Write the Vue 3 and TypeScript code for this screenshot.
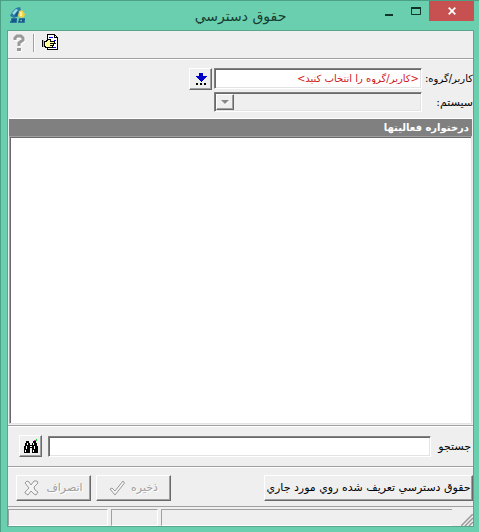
<script setup lang="ts">
import { ref } from 'vue'

const search = ref('')
const userGroup = ref('<كاربر/گروه را انتخاب كنيد>')
</script>

<template>
  <main class="window">
    <header class="titlebar">
      <svg class="logo" viewBox="0 0 16 16" aria-hidden="true">
        <path d="M0 9 2 5 6 1 10 0 11 3 9 9 4 11Z" fill="#2c7ba5" />
        <path d="M2 6 6 2 8 3 4 8Z" fill="#9bdce8" />
        <path d="M5 8 8 4 9 5 6 10Z" fill="#14598a" />
        <path d="M9 4 12 3 15 7 14 10 11 11 8 9Z" fill="#f5cf45" />
        <path d="M10 5 12 5 12 9 10 9Z" fill="#fff3a0" />
        <path d="M7 12H2V13.500H6V15H0M15 12H10L9 15H14V13.500H12" fill="none" stroke="#17598f" stroke-width="1.500" />
      </svg>
      <h1>حقوق دسترسي</h1>
      <div class="controls">
        <button class="ctl" aria-label="Minimize"><svg width="8" height="10"><path d="M0 8H8V10H0Z" fill="#12352a" /></svg></button>
        <button class="ctl" aria-label="Maximize"><svg width="10" height="10"><path d="M.5 2V8.500H9.500V2Z" fill="none" stroke="#12352a" /><path d="M0 1H10V3H0Z" fill="#12352a" /></svg></button>
        <button class="ctl close" aria-label="Close"><svg width="8" height="8"><path d="M.7.7 7.300 7.300M7.300.7.7 7.300" stroke="#fff" stroke-width="1.800" /></svg></button>
      </div>
    </header>

    <div class="client">
      <nav class="toolbar">
        <button class="tool help" aria-label="Help" disabled>
          <svg width="14" height="18" viewBox="0 0 14 18">
            <path d="M3 6V4L5 2H9L11 4V6L7 9V12" fill="none" stroke="#fff" stroke-width="3" transform="translate(1 1)" />
            <path d="M3 6V4L5 2H9L11 4V6L7 9V12" fill="none" stroke="#999" stroke-width="3" />
            <path d="M6 15H10V18H6Z" fill="#fff" /><path d="M5 14H9V17H5Z" fill="#999" />
          </svg>
        </button>
        <span class="sep"></span>
        <button class="tool" aria-label="Properties">
          <svg width="16" height="16" viewBox="0 0 16 16" shape-rendering="crispEdges">
            <path d="M5.500.5H12.500L15.500 3.500V15.500H5.500Z" fill="#fff" stroke="#000" />
            <path d="M12.500.5V3.500H15.500" fill="none" stroke="#000" />
            <path d="M7 3.500H11M12 6.500H14M12 9.500H14M8 13.500H14" stroke="#00f" />
            <path d="M2.500 7.500H4L6.500 5.500H8.500V7.500H12.500V9.500H11.500V11.500H10.500V13.500H4.500L2.500 12.500Z" fill="#ffff9c" stroke="#000" />
            <path d="M8 9.500H12M8 11.500H11" stroke="#000" />
            <path d="M0 6H2V13H0Z" fill="#0ff" /><path d="M0 6H1V13H0Z" fill="#000" />
          </svg>
        </button>
      </nav>

      <form class="fields" @submit.prevent>
        <div class="field">
          <button type="button" class="raised pick" aria-label="انتخاب">
            <svg width="12" height="14" viewBox="0 0 12 14" shape-rendering="crispEdges">
              <path d="M4 1H8V4H12L6 10L0 4H4Z" fill="#0000c8" />
              <path d="M1 11H3V13H1ZM5 11H7V13H5ZM9 11H11V13H9Z" />
            </svg>
          </button>
          <input id="user" v-model="userGroup" class="sunken user" readonly />
          <label for="user" class="small">كاربر/گروه:</label>
        </div>
        <div class="field">
          <div class="combo">
            <select id="system" class="sunken" disabled><option></option></select>
            <span class="raised arrow"><svg width="8" height="5"><path d="M1 1H8L4.500 5Z" fill="#fff" /><path d="M0 0H8L4 4Z" fill="#888" /></svg></span>
          </div>
          <label for="system">سيستم:</label>
        </div>
      </form>

      <section class="tree-panel">
        <h2>درختواره فعاليتها</h2>
        <div class="tree" role="tree" aria-label="درختواره فعاليتها"></div>
      </section>

      <form class="search" @submit.prevent>
        <button class="raised find" aria-label="جستجو">
          <svg width="16" height="16" viewBox="0 0 16 16" shape-rendering="crispEdges">
            <path d="M3 3H6V5H7V7H9V5H10V3H13V5H14V8H15V15H9V10H7V15H1V8H2V5H3Z" />
            <path d="M4 5H5V7H4ZM3 8H4V11H3ZM2 12H3V14H2ZM7 8H9V9H7ZM10 5H11V7H10ZM11 8H12V11H11ZM10 12H11V14H10Z" fill="#fff" />
            <path d="M11 2H13V3H11Z" fill="#b030b0" /><path d="M13 1H14V3H13Z" fill="#2c3" />
          </svg>
        </button>
        <input id="search" v-model="search" class="sunken" />
        <label for="search">جستجو</label>
      </form>

      <div class="actions">
        <button class="raised action" disabled>
          <svg width="16" height="16" viewBox="0 0 16 16"><path d="M1 3 3 1 5 2 7 5 10 1 13 1 14 3 10 7 11 10 14 12 12 15 10 14 7 11 4 15 1 13 1 12 5 8Z" fill="#f4f4f4" stroke="#999" /></svg>
          <span>انصراف</span>
        </button>
        <button class="raised action" disabled>
          <svg width="16" height="16" viewBox="0 0 16 16"><path d="M1 9 3 8 6 11 14 1 15.500 3 6 15Z" fill="#f4f4f4" stroke="#999" /></svg>
          <span>ذخيره</span>
        </button>
        <button class="raised rights"><span>حقوق دسترسي تعريف شده روي مورد جاري</span></button>
      </div>

      <footer class="status">
        <span class="pane first"></span>
        <span class="pane second"></span>
        <span class="pane rest"></span>
        <svg class="grip" width="12" height="12"><path d="M0 12 12 0M4 12 12 4M8 12 12 8" stroke="#999" stroke-width="1.500" /></svg>
      </footer>
    </div>
  </main>
</template>

<style>
body { margin: 0; }
</style>

<style scoped>
* { box-sizing: border-box; }
.window {
  display: flex;
  flex-direction: column;
  min-height: 100vh;
  padding: 0 5px 5px 6px;
  background: #69cfae;
  border-top: 1px solid #4ca184;
  border-left: 1px solid #4ca184;
  font: 11px/14px "DejaVu Sans", Tahoma, sans-serif;
  color: #000;
}
button, input, select { font: inherit; color: inherit; margin: 0; padding: 0; border-radius: 0; }
button { display: flex; align-items: center; justify-content: center; border: 0; background: none; }
h1, h2 { margin: 0; }
.titlebar { display: flex; height: 29px; }
.logo { width: 16px; height: 16px; margin: 6px 0 0 3px; }
h1 {
  flex: 1;
  margin-left: 80px;
  text-align: center;
  direction: rtl;
  font-size: 14px;
  line-height: 30px;
  font-weight: 400;
  color: #173c30;
}
.controls { display: flex; }
.ctl { width: 27px; height: 20px; }
.close { width: 45px; background: #c75050; }
.client {
  flex: 1;
  display: flex;
  flex-direction: column;
  overflow: hidden;
  background: #efefef;
  border: 1px solid #5ba58b;
}
.toolbar { display: flex; align-items: flex-start; gap: 6px; height: 29px; padding: 3px 4px; border-bottom: 1px solid #fff; box-shadow: inset 0 -1px #a0a0a0; }
.help { width: 14px; }
.sep { width: 2px; height: 18px; margin: 0 1px; background: #a0a0a0; border-right: 1px solid #fff; }
.raised { background: #efefef; border: 1px solid; border-color: #fff #696969 #696969 #fff; box-shadow: inset -1px -1px #a0a0a0; }
.sunken { border: 1px solid; border-color: #808080 #fff #fff #808080; box-shadow: inset 1px 1px #696969, inset -1px -1px #e3e3e3; background: #fff; outline: 0; }
.fields { display: flex; flex-direction: column; gap: 2px; height: 58px; padding: 8px 0 0; }
.field { display: flex; justify-content: flex-end; gap: 2px; }
.field label { width: 49px; direction: rtl; white-space: nowrap; line-height: 22px; }
.pick { width: 23px; height: 22px; }
.user { width: 208px; height: 21px; padding: 0 2px; direction: rtl; font-size: 10px; color: #d01820; }
.small { font-size: 10px; }
.combo { display: grid; width: 208px; height: 20px; }
.combo > * { grid-area: 1 / 1; }
select { appearance: none; opacity: 1; width: 100%; }
select.sunken { background: #efefef; }
.arrow { display: flex; align-items: center; justify-content: center; width: 18px; height: 16px; margin: 2px; }
.tree-panel { flex: 1; display: flex; flex-direction: column; border-top: 1px solid #fff; padding: 0 1px; }
h2 { height: 17px; padding: 0 3px; background: #808080; color: #fff; direction: rtl; font-size: 10px; line-height: 17px; }
.tree { flex: 1; min-height: 100px; background: #fff; border: 1px solid #a0a0a0; border-right-color: #e3e3e3; border-bottom-color: #e3e3e3; box-shadow: inset 1px 1px #696969; }
.search, .actions { display: flex; border-top: 1px solid #a0a0a0; box-shadow: inset 0 1px #fff; }
.search { height: 41px; padding: 9px 2px 0 11px; margin-top: 1px; }
.find { width: 23px; height: 22px; }
.search input { flex: 1; min-width: 0; height: 21px; margin: 1px 7px 0 6px; }
.search label { line-height: 24px; direction: rtl; white-space: nowrap; }
.actions { height: 40px; gap: 5px; padding: 8px 0 0 8px; }
.actions button { height: 26px; }
.action { width: 75px; gap: 6px; color: #a0a0a0; text-shadow: 1px 1px #fff; }
.actions .rights { width: 209px; margin-left: auto; white-space: nowrap; direction: rtl; }
.status { display: flex; gap: 3px; height: 20px; border-top: 1px solid #a0a0a0; padding-top: 2px; }
.pane { border: 1px solid; border-color: #a0a0a0 #fff #fff #a0a0a0; }
.first { width: 100px; }
.second { width: 47px; }
.rest { flex: 1; border-right: 0; }
.grip { width: 12px; margin: 5px 0 0 6px; }
</style>
